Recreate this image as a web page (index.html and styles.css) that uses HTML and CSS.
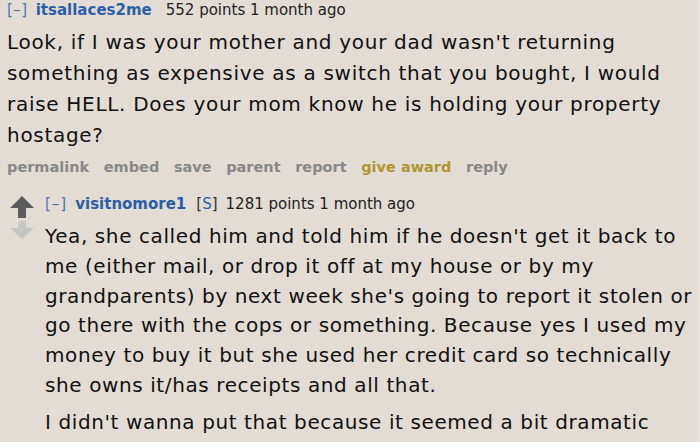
FILE: index.html
```html
<!DOCTYPE html>
<html>
<head>
<meta charset="utf-8">
<link rel="stylesheet" href="styles.css">
</head>
<body>
<div class="page">
  <div class="comment">
    <div class="tagline"><span class="expand">[–]</span><span class="author">itsallaces2me</span><span class="score">552 points 1 month ago</span></div>
    <div class="md">
      <p>Look, if I was your mother and your dad wasn't returning<br>something as expensive as a switch that you bought, I would<br>raise HELL. Does your mom know he is holding your property<br>hostage?</p>
    </div>
    <ul class="buttons">
      <li>permalink</li>
      <li>embed</li>
      <li>save</li>
      <li>parent</li>
      <li>report</li>
      <li class="award">give award</li>
      <li>reply</li>
    </ul>
    <div class="child">
      <div class="midcol">
        <svg class="arrow" width="24" height="22" viewBox="0 0 24 22"><path d="M12 0 L24 12 L16 12 L16 22 L8 22 L8 12 L0 12 Z" fill="#5c5c5c"/></svg>
        <svg class="arrow" width="24" height="18" viewBox="0 0 24 18"><path d="M8 0 L16 0 L16 7 L24 7 L12 18 L0 7 L8 7 Z" fill="#c6c6c6"/></svg>
      </div>
      <div class="entry">
        <div class="tagline"><span class="expand">[–]</span><span class="author">visitnomore1</span><span class="sub">[<span class="s">S</span>]</span><span class="score">1281 points 1 month ago</span></div>
        <div class="md md2">
          <p>Yea, she called him and told him if he doesn't get it back to<br>me (either mail, or drop it off at my house or by my<br>grandparents) by next week she's going to report it stolen or<br>go there with the cops or something. Because yes I used my<br>money to buy it but she used her credit card so technically<br>she owns it/has receipts and all that.</p>
          <p>I didn't wanna put that because it seemed a bit dramatic</p>
        </div>
      </div>
    </div>
  </div>
</div>
</body>
</html>
```
FILE: styles.css
```css
html, body {
  margin: 0;
  padding: 0;
  background: #e2dcd5;
}
.page {
  width: 700px;
  height: 442px;
  overflow: hidden;
  box-sizing: border-box;
  padding: 0 0 0 7px;
  border-right: 3px solid #e7e2dc;
  font-family: "DejaVu Sans", Verdana, sans-serif;
  color: #1a1a1a;
}
.tagline {
  font-size: 15px;
  line-height: 20px;
  color: #222;
  display: flex;
  white-space: nowrap;
}
.tagline .expand {
  color: #4f79ad;
  letter-spacing: 0.5px;
  margin-right: 8px;
}
.tagline .author {
  color: #2d5fa6;
  font-weight: bold;
  margin-right: 14px;
}
.entry .tagline .expand {
  letter-spacing: 1px;
  margin-right: 8px;
}
.entry .tagline .author {
  margin-right: 10px;
}
.tagline .sub {
  color: #333;
  margin-right: 8px;
}
.tagline .s {
  color: #2d5fa6;
}
.md {
  font-size: 20px;
  line-height: 31px;
  letter-spacing: 0.7px;
  color: #111;
}
.md p {
  margin: 0;
}
.comment > .md {
  margin-top: 7px;
}
.buttons {
  list-style: none;
  margin: 6px 0 0;
  padding: 0;
  display: flex;
  gap: 14.6px;
  font-size: 14.5px;
  line-height: 20px;
  font-weight: bold;
  color: #888;
}
.buttons .award {
  color: #b09530;
}
.child {
  display: flex;
  margin-top: 17px;
}
.midcol {
  width: 35px;
  padding-left: 3px;
  display: flex;
  flex-direction: column;
  align-items: flex-start;
  padding-top: 2px;
  gap: 3px;
}
.entry {
  flex: 1;
}
.md2 {
  margin-top: 8px;
  line-height: 29.8px;
  letter-spacing: 0.6px;
}
.md2 p + p {
  margin-top: 7px;
}
```
